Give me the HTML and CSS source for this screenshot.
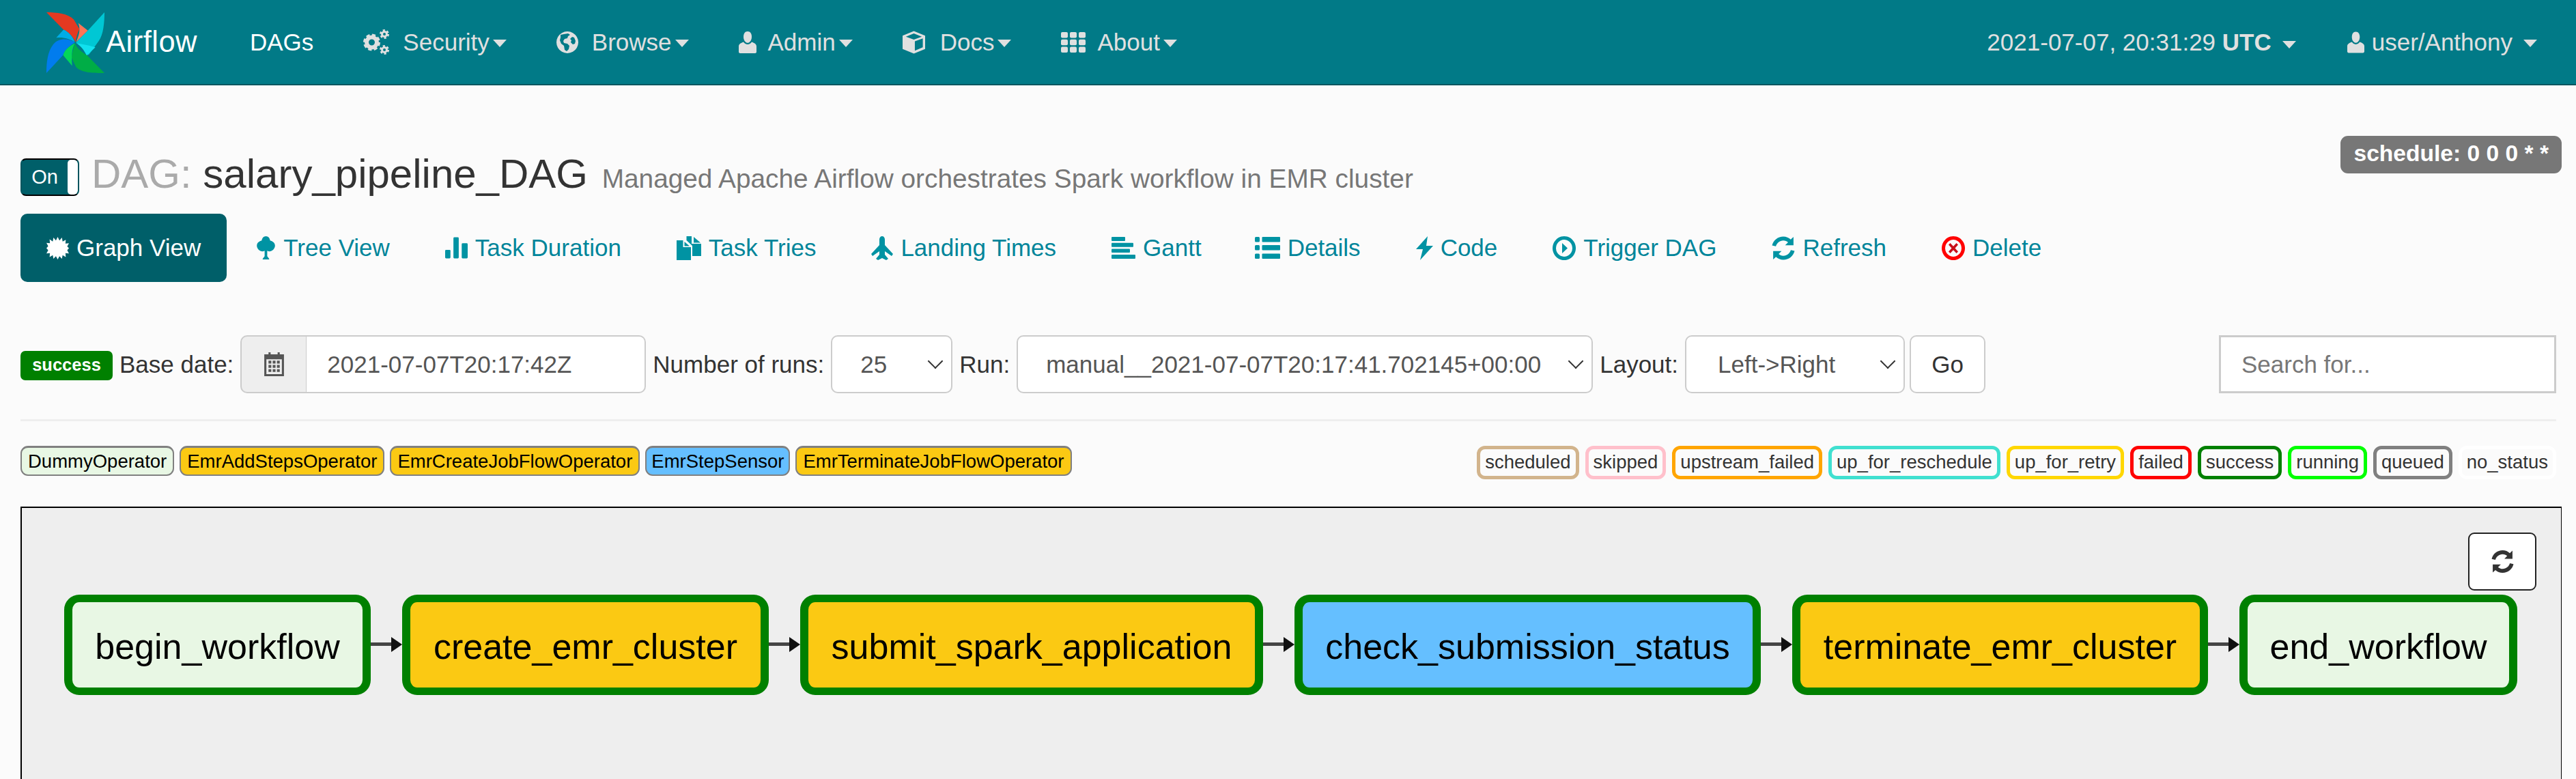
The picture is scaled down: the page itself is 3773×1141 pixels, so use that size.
FILE: index.html
```html
<!DOCTYPE html>
<html lang="en">
<head>
  <meta charset="UTF-8" />
  <title>Airflow - salary_pipeline_DAG</title>
  <link rel="stylesheet" href="styles.css">
</head>
<body>
  <svg class="defs" width="0" height="0">
    <defs>
      <symbol id="i-cog" viewBox="0 0 38 37">
        <circle cx="12.500" cy="19" r="7.500" fill="none" stroke="#e0e0e0" stroke-width="6"/>
        <circle cx="12.500" cy="19" r="10.500" fill="none" stroke="#e0e0e0" stroke-width="4" stroke-dasharray="5 3.250"/>
        <circle cx="31" cy="7" r="3.500" fill="none" stroke="#e0e0e0" stroke-width="3"/>
        <circle cx="31" cy="7" r="5.500" fill="none" stroke="#e0e0e0" stroke-width="3" stroke-dasharray="3 2.760"/>
        <circle cx="31" cy="30" r="3.500" fill="none" stroke="#e0e0e0" stroke-width="3"/>
        <circle cx="31" cy="30" r="5.500" fill="none" stroke="#e0e0e0" stroke-width="3" stroke-dasharray="3 2.760"/>
      </symbol>
      <symbol id="i-globe" viewBox="0 0 32 32">
        <path fill-rule="evenodd" d="M16 0a16 16 0 1 0 .01 0zM6 5l5-1 6-1 3 2-3 2-1 3-4 1-2 3 1 3 5 1 3 3-1 5-3 3-3-2-1-6-4-3-2-5 1-4zm17 3 3 1 2 5-1 4-3 1-3-3 1-3-2-2z"/>
      </symbol>
      <symbol id="i-user" viewBox="0 0 26 32">
        <path d="M13 0c4 0 6 3.500 6 8 0 3-1 5.500-2.500 7-1 1-2 1.800-3.500 1.800S10.500 16 9.500 15C8 13.500 7 11 7 8c0-4.500 2-8 6-8z"/>
        <path d="M7 15.500c1.500 2 3.500 3.500 6 3.500s4.500-1.500 6-3.500c4 1.500 7 3 7 6.500v8c0 1-1 2-2 2H2c-1 0-2-1-2-2v-8c0-3.500 3-5 7-6.500z"/>
      </symbol>
      <symbol id="i-cube" viewBox="0 0 34 34">
        <path fill-rule="evenodd" d="M17 0l17 7v20l-17 7L0 27V7zM17 3.500 5 8.500 17 13l12-4.500zM30.500 11 18.500 15.500v14l12-5z"/>
      </symbol>
      <symbol id="i-th" viewBox="0 0 36 30">
        <rect x="0" width="10" height="8.500" rx="2"/><rect x="13" width="10" height="8.500" rx="2"/><rect x="26" width="10" height="8.500" rx="2"/>
        <rect x="0" y="10.700" width="10" height="8.500" rx="2"/><rect x="13" y="10.700" width="10" height="8.500" rx="2"/><rect x="26" y="10.700" width="10" height="8.500" rx="2"/>
        <rect x="0" y="21.500" width="10" height="8.500" rx="2"/><rect x="13" y="21.500" width="10" height="8.500" rx="2"/><rect x="26" y="21.500" width="10" height="8.500" rx="2"/>
      </symbol>
      <symbol id="i-burst" viewBox="0 0 32 32">
        <path d="M16 0l2.500 5L22 1l1 5.500 4.500-2.500-.5 5.500 5-.5-2.500 4.500L32 16l-2.500 3 2.500 4.500-5-.5.500 5.500L23 26l-1 5-3.500-3.500L16 32l-2.500-4.500L10 31l-1-5-4.500 2.500L5 23l-5 .5L2.500 19 0 16l2.500-3L0 8.500l5 .5-.5-5.500L9 6.500 10 1l3.500 4z"/>
      </symbol>
      <symbol id="i-tree" viewBox="0 0 30 36">
        <path d="M15 0c3.500 0 6 3 6.500 6.500 4 1 7 3.500 7.500 7 .5 4-2 8-6 9.500-2 .8-4 .5-6-.5V31l3 4v1H10v-1l3-4v-8.500c-2 1-4 1.300-6 .5-4-1.500-6.500-5.500-6-9.500.5-3.500 3.500-6 7.500-7C9 3 11.500 0 15 0z"/>
      </symbol>
      <symbol id="i-stats" viewBox="0 0 34 32">
        <rect x="0" y="19" width="8" height="13" rx="1.500"/><rect x="12.500" y="0" width="8" height="32" rx="1.500"/><rect x="25" y="9" width="9" height="23" rx="1.500"/>
      </symbol>
      <symbol id="i-dup" viewBox="0 0 36 35">
        <path d="M0 6h9.500v10H21v19H0z"/>
        <path d="M11.500 8l7.500 6.500h-7.500z"/>
        <path d="M14.500 0H22v11h14v18H23V14L14.500 6z"/>
        <path d="M25 1l10 8.500H25z"/>
      </symbol>
      <symbol id="i-plane" viewBox="0 0 32 35">
        <path d="M16 0c2.500 0 4 2 4 5v8l12 13-2 3-10-7v5l5 6-3 2-6-3-6 3-3-2 5-6v-5L2 29l-2-3 12-13V5c0-3 1.500-5 4-5z"/>
      </symbol>
      <symbol id="i-align" viewBox="0 0 35 32">
        <rect width="20" height="6" rx="1"/><rect y="8.800" width="32" height="6" rx="1"/><rect y="17.500" width="27" height="5.500" rx="1"/><rect y="26" width="35" height="6" rx="1"/>
      </symbol>
      <symbol id="i-list" viewBox="0 0 37 32">
        <rect width="7" height="7.500" rx="1.500"/><rect x="10.500" width="26.500" height="7.500" rx="1"/>
        <rect y="12" width="7" height="7.500" rx="1.500"/><rect x="10.500" y="12" width="26.500" height="7.500" rx="1"/>
        <rect y="24.500" width="7" height="7.500" rx="1.500"/><rect x="10.500" y="24.500" width="26.500" height="7.500" rx="1"/>
      </symbol>
      <symbol id="i-flash" viewBox="0 0 25 35">
        <path d="M17 0 15 14h10L6 35l4-16H0z"/>
      </symbol>
      <symbol id="i-play" viewBox="0 0 34 35">
        <path fill-rule="evenodd" d="M17 0a17 17.500 0 1 0 .01 0zm0 5a12 12.500 0 1 1-.01 0zM14 10v15l8-7.500z"/>
      </symbol>
      <symbol id="i-refresh" viewBox="0 0 32 32">
        <path d="M16 0c4 0 7.500 1.500 10.200 4L30 .5V12H18.500l4-4C20.800 6.500 18.500 5.500 16 5.500 11 5.500 7 9 5.700 13.500L.5 12.300C2.200 5 8.500 0 16 0z"/>
        <path d="M16 32c-4 0-7.500-1.500-10.200-4L2 31.500V20h11.500l-4 4c1.700 1.500 4 2.500 6.500 2.500 5 0 9-3.500 10.300-8l5.200 1.200C29.800 27 23.500 32 16 32z"/>
      </symbol>
      <symbol id="i-remove" viewBox="0 0 34 35">
        <path fill-rule="evenodd" d="M17 0a17 17.500 0 1 0 .01 0zm0 5a12 12.500 0 1 1-.01 0z"/>
        <path fill="#c8101a" d="M12.500 10l-2.500 2.500 4.500 5-4.500 5 2.500 2.500 4.500-4.800 4.500 4.800 2.500-2.500-4.500-5 4.500-5L21.500 10 17 14.800z"/>
      </symbol>
      <symbol id="i-cal" viewBox="0 0 32 34">
        <path fill-rule="evenodd" d="M8 0h3v3h10V0h3v3h6v31H2V3h6zM5 10v21h22V10zm3 2h4v4H8zm6 0h4v4h-4zm6 0h4v4h-4zM8 18h4v4H8zm6 0h4v4h-4zm6 0h4v4h-4zM8 24h4v4H8zm6 0h4v4h-4zm6 0h4v4h-4z"/>
      </symbol>
    </defs>
  </svg>

  <nav class="navbar">
    <a class="brand">
      <svg class="logo" viewBox="55 25 255 255" preserveAspectRatio="none">
        <path fill="#e43921" d="M55 25C100 25 150 30 175 55L200 95C190 115 185 135 183 150 170 125 150 105 130 98Z"/>
        <path fill="#ff7557" d="M195 70 237 102 185 150C200 120 205 95 195 70Z"/>
        <path fill="#00c7d4" d="M310 25C310 70 305 120 285 145L240 205C225 175 205 160 185 152L237 102Z"/>
        <path fill="#11e1ee" d="M185 153C215 160 250 165 270 172L232 207C222 185 205 165 185 153Z"/>
        <path fill="#00ad46" d="M310 280C265 280 210 280 185 255L165 215C170 190 175 170 180 155 190 180 215 195 235 207Z"/>
        <path fill="#04d659" d="M180 155C165 180 165 215 168 250L128 205C135 180 160 165 180 155Z"/>
        <path fill="#017cee" d="M55 280C55 235 60 190 85 160 110 130 155 135 180 152 160 165 135 180 128 205Z"/>
        <path fill="#00ace6" d="M98 132 130 98C150 105 170 125 180 150 155 135 125 128 98 132Z"/>
      </svg>
      <span class="brand-name">Airflow</span>
    </a>
    <ul class="nav-list">
      <li class="nav-item nav-main">DAGs</li>
      <li class="nav-item"><svg class="nav-icon ic-cog"><use href="#i-cog"/></svg>Security<span class="caret"></span></li>
      <li class="nav-item"><svg class="nav-icon ic-globe"><use href="#i-globe"/></svg>Browse<span class="caret"></span></li>
      <li class="nav-item"><svg class="nav-icon ic-user"><use href="#i-user"/></svg>Admin<span class="caret"></span></li>
      <li class="nav-item"><svg class="nav-icon ic-cube"><use href="#i-cube"/></svg>Docs<span class="caret"></span></li>
      <li class="nav-item"><svg class="nav-icon ic-th"><use href="#i-th"/></svg>About<span class="caret"></span></li>
    </ul>
    <ul class="nav-right">
      <li class="nav-clock">2021-07-07, 20:31:29 <b>UTC</b><span class="caret caret-wide"></span></li>
      <li class="nav-user"><svg class="nav-icon ic-user-r"><use href="#i-user"/></svg>user/Anthony<span class="caret caret-wide"></span></li>
    </ul>
  </nav>

  <main class="page">
    <div class="title-row">
      <div class="toggle"><span class="toggle-on">On</span><span class="toggle-handle"></span></div>
      <h4 class="dag-title"><span class="dag-label">DAG: </span>salary_pipeline_DAG <small>Managed Apache Airflow orchestrates Spark workflow in EMR cluster</small></h4>
      <span class="schedule">schedule: 0 0 0 * *</span>
    </div>

    <ul class="tabs">
      <li class="tab active"><svg class="tab-icon w-burst"><use href="#i-burst"/></svg>Graph View</li>
      <li class="tab"><svg class="tab-icon w-tree"><use href="#i-tree"/></svg>Tree View</li>
      <li class="tab"><svg class="tab-icon w-stats"><use href="#i-stats"/></svg>Task Duration</li>
      <li class="tab"><svg class="tab-icon w-dup"><use href="#i-dup"/></svg>Task Tries</li>
      <li class="tab"><svg class="tab-icon w-plane"><use href="#i-plane"/></svg>Landing Times</li>
      <li class="tab"><svg class="tab-icon w-align"><use href="#i-align"/></svg>Gantt</li>
      <li class="tab"><svg class="tab-icon w-list"><use href="#i-list"/></svg>Details</li>
      <li class="tab"><svg class="tab-icon w-flash"><use href="#i-flash"/></svg>Code</li>
      <li class="tab"><svg class="tab-icon w-play"><use href="#i-play"/></svg>Trigger DAG</li>
      <li class="tab"><svg class="tab-icon w-play"><use href="#i-refresh"/></svg>Refresh</li>
      <li class="tab"><svg class="tab-icon w-play red"><use href="#i-remove"/></svg>Delete</li>
    </ul>

    <form class="filters">
      <span class="badge-success">success</span>
      <label class="lbl lbl-base">Base date:</label>
      <div class="input-group">
        <span class="addon"><svg class="cal"><use href="#i-cal"/></svg></span>
        <input class="date-input" type="text" value="2021-07-07T20:17:42Z" />
      </div>
      <label class="lbl">Number of runs:</label>
      <div class="sel-wrap sel-runs"><select class="sel"><option>25</option></select></div>
      <label class="lbl">Run:</label>
      <div class="sel-wrap sel-run"><select class="sel"><option>manual__2021-07-07T20:17:41.702145+00:00</option></select></div>
      <label class="lbl">Layout:</label>
      <div class="sel-wrap sel-layout"><select class="sel"><option>Left-&gt;Right</option></select></div>
      <button class="go" type="button">Go</button>
      <input class="search" type="text" placeholder="Search for..." />
    </form>

    <hr class="rule" />

    <div class="legend-row">
      <div class="legend ops">
        <span class="op op-dummy">DummyOperator</span>
        <span class="op op-emr">EmrAddStepsOperator</span>
        <span class="op op-emr">EmrCreateJobFlowOperator</span>
        <span class="op op-sensor">EmrStepSensor</span>
        <span class="op op-emr">EmrTerminateJobFlowOperator</span>
      </div>
      <div class="legend states">
        <span class="state s-scheduled">scheduled</span>
        <span class="state s-skipped">skipped</span>
        <span class="state s-upstream">upstream_failed</span>
        <span class="state s-resched">up_for_reschedule</span>
        <span class="state s-retry">up_for_retry</span>
        <span class="state s-failed">failed</span>
        <span class="state s-success">success</span>
        <span class="state s-running">running</span>
        <span class="state s-queued">queued</span>
        <span class="state s-none">no_status</span>
      </div>
    </div>

    <div class="graph">
      <button class="graph-refresh" type="button"><svg class="refresh-icon"><use href="#i-refresh"/></svg></button>
      <div class="dag">
        <div class="node op-dummy n-begin">begin_workflow</div>
        <div class="node op-emr edge n-create">create_emr_cluster</div>
        <div class="node op-emr edge n-submit">submit_spark_application</div>
        <div class="node op-sensor edge n-check">check_submission_status</div>
        <div class="node op-emr edge n-term">terminate_emr_cluster</div>
        <div class="node op-dummy edge n-end">end_workflow</div>
      </div>
    </div>
  </main>
</body>
</html>
```

FILE: styles.css
```css
* {
  box-sizing: border-box;
}

html, body {
  height: 100%;
}

body {
  margin: 0;
  background-color: #fbfbfb;
  color: #333;
  font-family: "Liberation Sans", Arial, sans-serif;
  font-size: 35px;
  overflow: hidden;
}

.defs {
  position: absolute;
}

ul {
  list-style: none;
  margin: 0;
  padding: 0;
}

/* top bar */
.navbar {
  display: flex;
  align-items: center;
  height: 125px;
  padding: 0 57px 0 68px;
  background-color: #017a87;
  border-bottom: 2px solid #00565f;
  color: #e0e0e0;
}

.brand {
  display: flex;
  align-items: center;
  width: 298px;
}

.logo {
  width: 85px;
  height: 89px;
  margin-top: 2px;
}

.brand-name {
  margin-left: 2px;
  color: #fff;
  font-size: 43.500px;
  letter-spacing: 0.5px;
}

.nav-list, .nav-right {
  display: flex;
  align-items: center;
}

.nav-list {
  flex: 1;
}

.nav-item {
  display: flex;
  align-items: center;
  margin-right: 73px;
}

.nav-main {
  color: #fff;
}

.nav-icon {
  flex: none;
  fill: #e0e0e0;
  margin-right: 17px;
}

.ic-cog { width: 38px; height: 37px; margin-right: 20px; }
.ic-globe { width: 32px; height: 32px; margin-right: 20px; }
.ic-user { width: 26px; height: 32px; }
.ic-cube { width: 33px; height: 34px; margin-right: 22px; }
.ic-th { width: 36px; height: 30px; }
.ic-user-r { width: 25px; height: 32px; margin-right: 11px; }

.caret {
  flex: none;
  width: 0;
  height: 0;
  margin-left: 5px;
  margin-top: 3px;
  border-top: 11px solid #e0e0e0;
  border-left: 10px solid transparent;
  border-right: 10px solid transparent;
}

.caret-wide {
  display: inline-block;
  margin-left: 16px;
  vertical-align: middle;
}

.nav-clock {
  margin-right: 75px;
}

.nav-clock b {
  font-weight: 700;
}

.nav-user {
  display: flex;
  align-items: center;
}

/* page */
.page {
  padding: 0 21px 0 30px;
}

.title-row {
  display: flex;
  align-items: flex-start;
  height: 188px;
  padding-top: 74px;
}

.toggle {
  display: flex;
  width: 86px;
  height: 55px;
  margin-top: 33px;
  background-color: #005f69;
  border: 2px solid #00565f;
  border-top-color: #000;
  border-bottom-color: #000;
  border-radius: 8px;
  overflow: hidden;
}

.toggle-on {
  flex: 1;
  color: #fff;
  font-size: 29px;
  line-height: 50px;
  text-align: center;
}

.toggle-handle {
  width: 15px;
  background-color: #fff;
  border-radius: 5px;
}

.dag-title {
  margin: 14px 0 0 18px;
  font-size: 60px;
  font-weight: 400;
  line-height: 84px;
  white-space: nowrap;
}

.dag-label {
  color: #aaa;
}

.dag-title small {
  color: #777;
  font-size: 38.800px;
  margin-left: 4px;
}

.schedule {
  margin-left: auto;
  padding: 0 19px;
  height: 55px;
  background-color: #777;
  border-radius: 11px;
  color: #fff;
  font-size: 33.600px;
  font-weight: 700;
  line-height: 52px;
  white-space: nowrap;
}

/* tabs */
.tabs {
  display: flex;
}

.tab {
  display: flex;
  align-items: center;
  height: 100px;
  padding: 0 38px;
  margin-right: 5px;
  color: #00859a;
  border-radius: 10px;
  white-space: nowrap;
}

.tab.active {
  background-color: #005f69;
  color: #fff;
}

.tab-icon {
  flex: none;
  fill: #0093a3;
  margin-right: 11px;
}

.tab.active .tab-icon {
  fill: #fff;
}

.tab-icon.red {
  fill: #f00;
}

.w-burst { width: 33px; height: 33px; }
.w-tree { width: 29px; height: 34px; }
.w-stats { width: 33px; height: 32px; }
.w-dup { width: 36px; height: 35px; }
.w-plane { width: 32px; height: 35px; }
.w-align { width: 35px; height: 32px; }
.w-list { width: 37px; height: 32px; margin-left: -3px; }
.w-flash { width: 25px; height: 35px; }
.w-play { width: 34px; height: 35px; }

/* filter form */
.filters {
  display: flex;
  align-items: center;
  height: 85px;
  margin-top: 78px;
}

.badge-success {
  flex: none;
  width: 135px;
  height: 43px;
  margin-top: 4px;
  background-color: #008000;
  border-radius: 7px;
  color: #fff;
  font-size: 25.500px;
  font-weight: 700;
  line-height: 41px;
  text-align: center;
}

.lbl {
  margin: 0 10px;
  white-space: nowrap;
}

.input-group {
  flex: none;
  display: flex;
  width: 594px;
  height: 85px;
}

.addon {
  display: flex;
  align-items: center;
  justify-content: center;
  width: 97px;
  background-color: #eee;
  border: 2px solid #ccc;
  border-right-width: 1px;
  border-radius: 10px 0 0 10px;
}

.cal {
  width: 33px;
  height: 35px;
  fill: #555;
}

.date-input {
  flex: 1;
  min-width: 0;
  padding: 0 30px;
  background-color: #fff;
  border: 2px solid #ccc;
  border-left: 0;
  border-radius: 0 10px 10px 0;
  color: #555;
  font-family: inherit;
  font-size: 35px;
}

.sel-wrap {
  flex: none;
  position: relative;
  height: 85px;
}

/* chevron of the select */
.sel-wrap::after {
  content: "";
  position: absolute;
  top: 30px;
  right: 17px;
  width: 14px;
  height: 14px;
  border-right: 2px solid #333;
  border-bottom: 2px solid #333;
  transform: rotate(45deg);
}

.sel {
  width: 100%;
  height: 85px;
  padding: 0 0 0 41px;
  appearance: none;
  background-color: #fff;
  border: 2px solid #ccc;
  border-radius: 10px;
  color: #555;
  font-family: inherit;
  font-size: 35px;
}

.sel-runs { width: 178px; }
.sel-run { width: 844px; }
.sel-layout { width: 322px; }
.sel-layout .sel { padding-left: 46px; }

.go {
  flex: none;
  width: 111px;
  height: 85px;
  margin-left: 7px;
  background-color: #fff;
  border: 2px solid #ccc;
  border-radius: 10px;
  color: #333;
  font-family: inherit;
  font-size: 35px;
}

.search {
  width: 494px;
  height: 85px;
  margin-left: auto;
  margin-right: 8px;
  padding: 0 30px;
  background-color: #fff;
  border: 3px solid #ccc;
  color: #555;
  font-family: inherit;
  font-size: 35px;
}

.search::placeholder {
  color: #777;
}

.rule {
  height: 3px;
  margin: 38px 8px 0 0;
  background-color: #eee;
  border: 0;
}

/* legends */
.legend-row {
  display: flex;
  justify-content: space-between;
  align-items: flex-start;
  height: 89px;
  margin: 36px 8px 0 0;
}

.legend {
  display: flex;
  gap: 9px;
  font-size: 27.500px;
}

.ops {
  gap: 8px;
}

.op {
  height: 44px;
  padding: 0 9px;
  border: 2px solid #808080;
  border-top-width: 3px;
  border-radius: 11px;
  color: #000;
  line-height: 39px;
}

.ops .op-sensor {
  padding: 0 7px;
}

.op-dummy { background-color: #e8f7e4; }
.op-emr { background-color: #fbc913; }
.op-sensor { background-color: #65bfff; }

.state {
  height: 49px;
  padding: 0 7px;
  background-color: #fbfbfb;
  border: 5px solid #fff;
  border-radius: 12px;
  color: #333;
  line-height: 38px;
}

.s-scheduled { border-color: #d2b48c; }
.s-skipped { border-color: #ffc0cb; }
.s-upstream { border-color: #ffa500; }
.s-resched { border-color: #40e0d0; }
.s-retry { border-color: #ffd700; }
.s-failed { border-color: #f00; }
.s-success { border-color: #008000; }
.s-running { border-color: #0f0; }
.s-queued { border-color: #808080; }

/* graph */
.graph {
  position: relative;
  height: 420px;
  background-color: #eee;
  border: 2px solid #000;
  border-bottom: 0;
  border-right-width: 1px;
}

.graph-refresh {
  position: absolute;
  top: 36px;
  right: 36px;
  width: 100px;
  height: 85px;
  padding: 0;
  background-color: #fff;
  border: 2px solid #222;
  border-radius: 9px;
}

.refresh-icon {
  display: block;
  width: 33px;
  height: 33px;
  margin: auto;
  fill: #333;
}

.dag {
  display: flex;
  gap: 46px;
  padding: 127px 0 0 62px;
}

.node {
  flex: none;
  position: relative;
  height: 147px;
  border: 12px solid #008000;
  border-top-width: 11px;
  border-bottom-width: 11px;
  border-radius: 22px;
  color: #000;
  font-size: 52px;
  line-height: 130px;
  text-align: center;
  white-space: nowrap;
}

.n-begin { width: 449px; }
.n-create { width: 537px; }
.n-submit { width: 678px; }
.n-check { width: 683px; }
.n-term { width: 609px; }
.n-end { width: 407px; }

.edge::before {
  content: "";
  position: absolute;
  left: -58px;
  top: 59px;
  width: 32px;
  height: 5px;
  background-color: #444;
}

.edge::after {
  content: "";
  position: absolute;
  left: -28px;
  top: 51px;
  border-top: 11px solid transparent;
  border-bottom: 11px solid transparent;
  border-left: 16px solid #111;
}
```
